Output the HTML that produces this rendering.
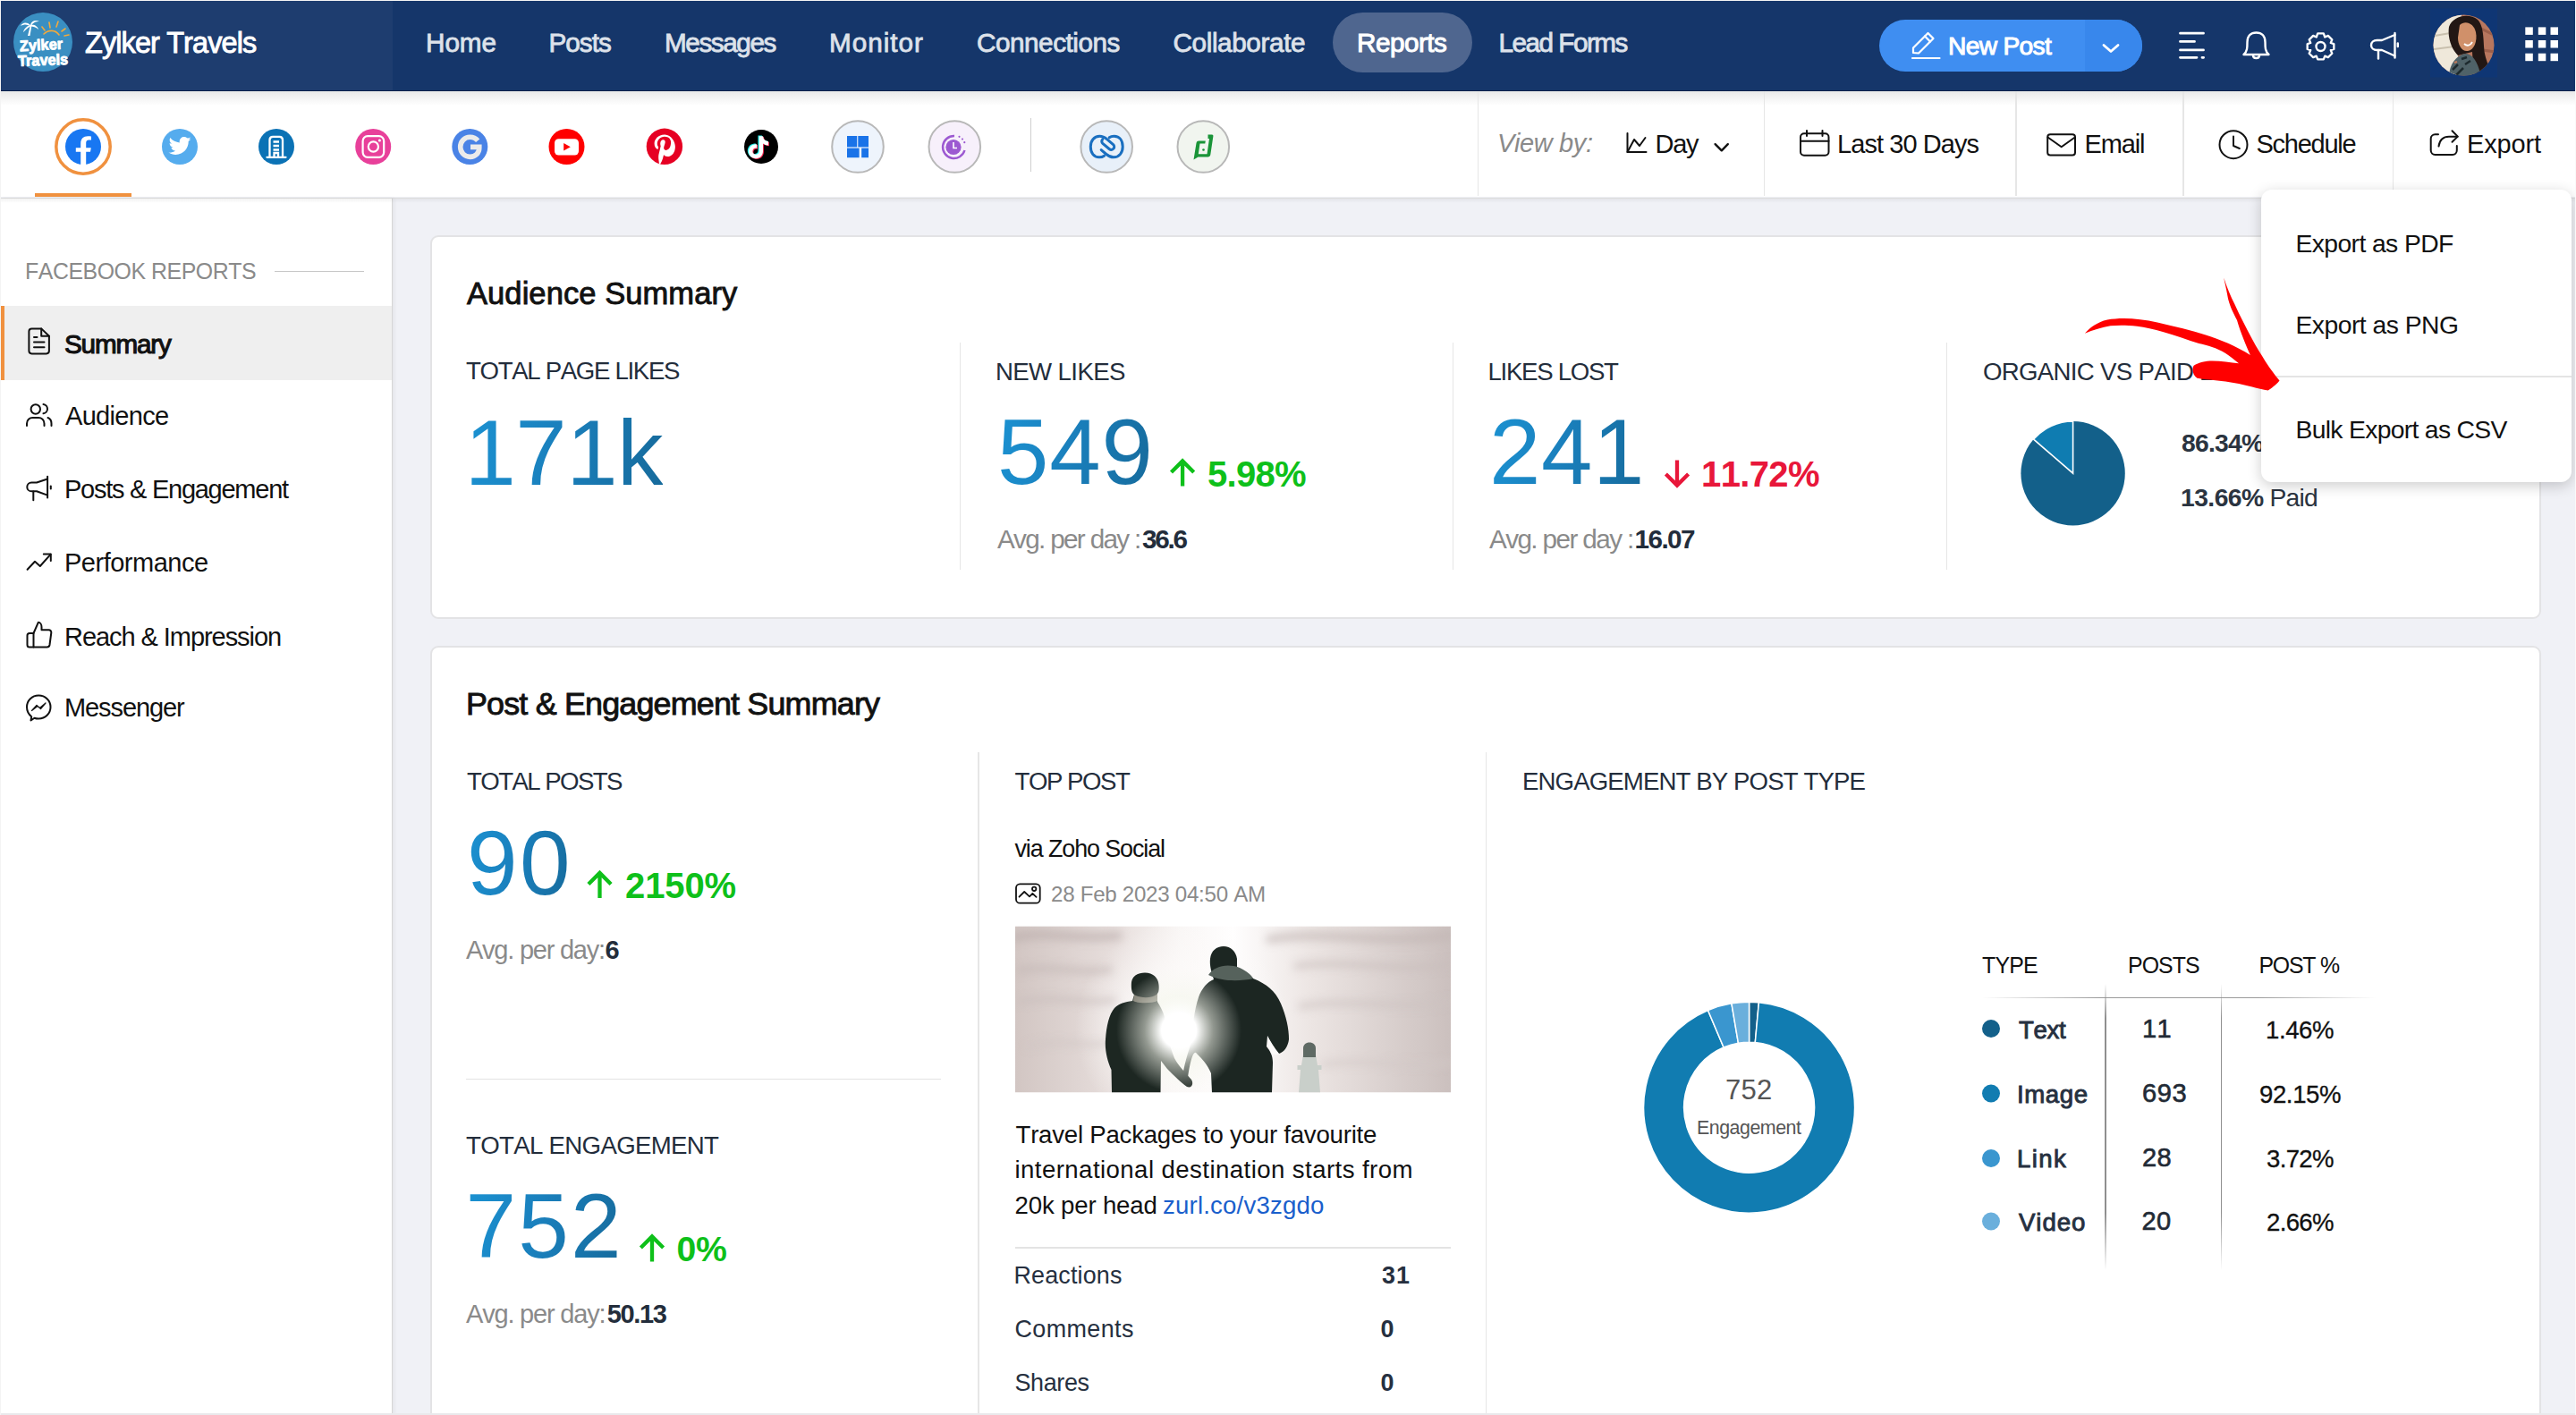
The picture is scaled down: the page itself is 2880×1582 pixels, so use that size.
<!DOCTYPE html>
<html><head><meta charset="utf-8">
<style>
html,body{margin:0;padding:0;}
body{width:2880px;height:1582px;position:relative;overflow:hidden;background:#f0f1f6;font-family:"Liberation Sans",sans-serif;}
.a{position:absolute;box-sizing:border-box;}
.t{position:absolute;white-space:nowrap;font-kerning:none;font-family:"Liberation Sans",sans-serif;}
.g{background:linear-gradient(100deg,#1b92d2 0%,#1a80bd 45%,#166a9b 100%);-webkit-background-clip:text;background-clip:text;color:transparent;}
svg{position:absolute;overflow:visible;}
</style></head>
<body>
<!-- page frame -->
<div class="a" style="left:0;top:0;width:2880px;height:1582px;border-left:1px solid #f4f4f4;border-top:1px solid #f4f4f4;border-right:1.5px solid #fafafa;z-index:20;pointer-events:none;"></div>

<!-- header -->
<div class="a" style="left:0;top:0;width:2880px;height:102px;background:#15366a;"></div>
<div class="a" style="left:0;top:0;width:439px;height:101px;background:#1e3d6f;"></div>
<div class="a" style="left:0;top:101px;width:2880px;height:1px;background:#04204a;"></div>
<!-- reports pill -->
<div class="a" style="left:1490px;top:13.5px;width:155.5px;height:67px;border-radius:34px;background:#4f668f;"></div>
<!-- new post button -->
<div class="a" style="left:2101px;top:22px;width:293.5px;height:57.5px;border-radius:29px;background:#3f8ef1;overflow:hidden;">
  <div class="a" style="left:229.5px;top:0;width:64px;height:58px;background:#3887ec;"></div>
</div>

<!-- sub header -->
<div class="a" style="left:0;top:102px;width:2880px;height:118px;background:#fff;"></div>
<div class="a" style="left:0;top:102px;width:2880px;height:16px;background:linear-gradient(#e9e9e9,#ffffff);"></div>
<div class="a" style="left:0;top:220.5px;width:2880px;height:1.5px;background:#dcdcdc;"></div>
<div class="a" style="left:0;top:222px;width:2880px;height:5px;background:linear-gradient(rgba(0,0,0,0.05),rgba(0,0,0,0));z-index:1;"></div>
<!-- toolbar separators -->
<div class="a" style="left:1651.5px;top:102px;width:1.5px;height:117px;background:#e6e6e6;"></div>
<div class="a" style="left:1971.5px;top:102px;width:1.5px;height:117px;background:#e6e6e6;"></div>
<div class="a" style="left:2253px;top:102px;width:1.5px;height:117px;background:#e6e6e6;"></div>
<div class="a" style="left:2440px;top:102px;width:1.5px;height:117px;background:#e6e6e6;"></div>
<div class="a" style="left:2674.5px;top:102px;width:1.5px;height:117px;background:#e6e6e6;"></div>
<!-- FB underline -->
<div class="a" style="left:39px;top:216px;width:108px;height:4px;background:#f0913f;"></div>
<!-- icon divider -->
<div class="a" style="left:1151.5px;top:132px;width:1.5px;height:60px;background:#cfcfcf;"></div>

<!-- sidebar -->
<div class="a" style="left:0;top:222px;width:439px;height:1360px;background:#fff;border-right:1.5px solid #d6d6d6;box-shadow:2px 0 4px rgba(0,0,0,0.05);"></div>
<div class="a" style="left:1px;top:342px;width:436.5px;height:82.5px;background:#efefef;"></div>
<div class="a" style="left:1px;top:342px;width:4px;height:82.5px;background:#f0913f;"></div>
<div class="a" style="left:307px;top:302.5px;width:100px;height:1.5px;background:#c8c8c8;"></div>

<!-- audience card -->
<div class="a" style="left:480.5px;top:262.5px;width:2360.5px;height:429px;background:#fff;border:2px solid #e3e3e5;border-radius:9px;"></div>
<div class="a" style="left:1072.5px;top:382.5px;width:1.5px;height:254px;background:#e6e6e6;"></div>
<div class="a" style="left:1623.5px;top:382.5px;width:1.5px;height:254px;background:#e6e6e6;"></div>
<div class="a" style="left:2175.5px;top:382.5px;width:1.5px;height:254px;background:#e6e6e6;"></div>

<!-- post card -->
<div class="a" style="left:480.5px;top:721.5px;width:2360.5px;height:900px;background:#fff;border:2px solid #e3e3e5;border-radius:9px;"></div>
<div class="a" style="left:1093px;top:841px;width:1.5px;height:760px;background:#e6e6e6;"></div>
<div class="a" style="left:1660.5px;top:841px;width:1.5px;height:760px;background:#e6e6e6;"></div>
<div class="a" style="left:521px;top:1205.5px;width:531px;height:1.5px;background:#e3e3e3;"></div>
<div class="a" style="left:1135px;top:1393.5px;width:487px;height:2px;background:#e3e3e3;"></div>
<!-- table lines -->
<div class="a" style="left:2216px;top:1114.5px;width:440px;height:1.5px;background:linear-gradient(90deg,rgba(150,150,150,0) 0%,#9a9a9a 30%,#9a9a9a 70%,rgba(150,150,150,0) 100%);"></div>
<div class="a" style="left:2353px;top:1100px;width:1.5px;height:320px;background:linear-gradient(rgba(140,140,140,0),#8f8f8f 12%,#8f8f8f 80%,rgba(140,140,140,0));"></div>
<div class="a" style="left:2482.5px;top:1100px;width:1.5px;height:320px;background:linear-gradient(rgba(140,140,140,0),#8f8f8f 12%,#8f8f8f 80%,rgba(140,140,140,0));"></div>

<!-- page bottom line -->
<div class="a" style="left:0;top:1580px;width:2880px;height:2px;background:#e9e9ec;z-index:19;"></div>

<!-- dropdown -->
<div class="a" style="left:2528px;top:212px;width:347px;height:327px;background:#fff;border-radius:12px;box-shadow:0 4px 16px rgba(0,0,0,0.2);z-index:5;">
  <div class="a" style="left:0;top:208px;width:347px;height:2px;background:#e4e4e4;"></div>
</div>

<svg style="left:0;top:0;z-index:3;" width="2880" height="1582" viewBox="0 0 2880 1582">
<defs>
  <radialGradient id="sun" cx="1322" cy="1150" r="120" gradientUnits="userSpaceOnUse">
    <stop offset="0" stop-color="#ffffff"/>
    <stop offset="0.35" stop-color="#fdfbfa"/>
    <stop offset="1" stop-color="#fdfbfa" stop-opacity="0"/>
  </radialGradient>
  <linearGradient id="sky" x1="0" y1="0" x2="1" y2="0">
    <stop offset="0" stop-color="#d2c6c3"/>
    <stop offset="0.22" stop-color="#e6dddb"/>
    <stop offset="0.38" stop-color="#f9f6f5"/>
    <stop offset="0.5" stop-color="#fffefe"/>
    <stop offset="0.68" stop-color="#ece5e3"/>
    <stop offset="1" stop-color="#cbc0be"/>
  </linearGradient>
  <radialGradient id="glow" cx="1318" cy="1152" r="70" gradientUnits="userSpaceOnUse">
    <stop offset="0" stop-color="#ffffff"/>
    <stop offset="0.28" stop-color="#ffffff" stop-opacity="1"/>
    <stop offset="0.55" stop-color="#f3f5ea" stop-opacity="0.55"/>
    <stop offset="1" stop-color="#f4f6ee" stop-opacity="0"/>
  </radialGradient>
  <clipPath id="avclip"><circle cx="2754.5" cy="50.5" r="34"/></clipPath>
  <filter id="blur4" x="-20%" y="-50%" width="140%" height="200%"><feGaussianBlur stdDeviation="5"/></filter>
  <filter id="blur1"><feGaussianBlur stdDeviation="0.7"/></filter>
  <clipPath id="photoclip"><rect x="1135" y="1035.5" width="487" height="186"/></clipPath>
</defs>

<!-- ===== header logo ===== -->
<circle cx="48" cy="47" r="33" fill="#3a8fc2"/>
<g fill="#fff">
  <path d="M31 40 L34 28 L35.5 28 L33.5 40 Z"/>
  <path d="M34 28 C30 24 25 25 23 29 C27 27 30 27 33.5 29 Z"/>
  <path d="M34 28 C35 23 40 22 44 24 C40 24 37 25 34.8 29 Z"/>
  <path d="M34 28 C38 27 42 29 43 33 C40 30 37 29.5 34.5 29.5 Z"/>
  <path d="M34 28 C30 29 27 32 26 36 C29 33 31 31 34 29.5 Z"/>
</g>
<g stroke="#f2a93b" stroke-width="1.6" fill="none" stroke-linecap="round">
  <path d="M49 38 C54 33 62 33 66 39"/>
  <path d="M47 30 L50 34"/><path d="M55 25 L56 31"/><path d="M65 24 L63 30"/><path d="M73 32 L69 35"/><path d="M77 39 L72 40"/>
</g>
<g font-family="Liberation Sans" font-weight="bold" fill="#fff" stroke="#fff" stroke-width="0.9" stroke-linejoin="round">
<text x="22" y="56" font-size="17" textLength="48" lengthAdjust="spacingAndGlyphs" transform="rotate(-3 46 50)">Zylker</text>
<text x="20" y="73" font-size="17" textLength="56" lengthAdjust="spacingAndGlyphs" transform="rotate(-2 48 66)">Travels</text>
</g>

<!-- ===== new post button icons ===== -->
<g stroke="#fff" stroke-width="2.2" fill="none" stroke-linejoin="round" stroke-linecap="round">
  <path d="M2139 59 L2139 53.5 L2155.5 37 L2161.5 43 L2145 59.5 Z"/>
  <path d="M2152 40.5 L2158 46.5"/>
  <path d="M2138 65 L2168.5 65"/>
  <path d="M2352 50.5 L2360 57.5 L2368 50.5" stroke-width="2.8"/>
</g>

<!-- ===== header right icons ===== -->
<g stroke="#fff" stroke-width="2.8" fill="none" stroke-linecap="round">
  <path d="M2437.5 37.2 H2463.5 M2437.5 46.4 H2453.5 M2437.5 55.9 H2463.5 M2437.5 64.3 H2456 M2462 64.3 H2463.6"/>
</g>
<g stroke="#fff" stroke-width="2.4" fill="none" stroke-linejoin="round">
  <path d="M2508.5 61 C2512.5 57.5 2512.5 53 2512.5 47 C2512.5 40 2516.5 36.5 2522.5 36.5 C2528.5 36.5 2532.5 40 2532.5 47 C2532.5 53 2532.5 57.5 2536.5 61 Z"/>
  <path d="M2519 62 C2519 66 2526 66 2526 62"/>
</g>
<g transform="translate(2594.5 51)">
  <path fill="none" stroke="#fff" stroke-width="2.4" stroke-linejoin="round" d="M-3.4 -14 L3.4 -14 L4.9 -9.8 L8.6 -11.4 L13.2 -6.8 L11.6 -3.1 L15.3 -1.9 L15.3 4.1 L11.6 5.3 L13.2 9 L8.6 13.6 L4.9 12 L3.4 15.8 L-3.4 15.8 L-4.9 12 L-8.6 13.6 L-13.2 9 L-11.6 5.3 L-15.3 4.1 L-15.3 -1.9 L-11.6 -3.1 L-13.2 -6.8 L-8.6 -11.4 L-4.9 -9.8 Z" transform="scale(0.97)"/>
  <circle cx="0" cy="1" r="5" fill="none" stroke="#fff" stroke-width="2.4"/>
</g>
<g stroke="#fff" stroke-width="2.4" fill="none" stroke-linejoin="round" stroke-linecap="round">
  <path d="M2677.5 37 V64.5"/>
  <path d="M2677.5 39 L2663 45 H2657.5 C2653.5 45 2651 47.5 2651 50.5 C2651 53.5 2653.5 56 2657.5 56 H2663 L2677.5 62.5"/>
  <path d="M2659 56 V65.5"/>
  <path d="M2680.8 48.5 V52"/>
</g>
<!-- avatar -->
<rect x="2717" y="9.5" width="75" height="77" fill="#0f3674"/>
<g clip-path="url(#avclip)">
  <rect x="2720" y="16" width="70" height="70" fill="#b8775e"/>
  <path d="M2720 16 H2752 L2746 86 H2720 Z" fill="#efe8da"/>
  <path d="M2722 40 L2745 36 M2721 55 L2744 52" stroke="#c9c0ae" stroke-width="2"/>
  <path d="M2770 30 L2790 40 M2768 55 L2790 58" stroke="#9c5f4a" stroke-width="3"/>
  <path d="M2738 30 C2742 18 2760 14 2770 22 C2778 30 2776 48 2778 60 C2780 70 2784 76 2786 84 L2770 86 C2766 76 2764 66 2764 58 L2748 62 C2742 56 2736 44 2738 30 Z" fill="#221714"/>
  <path d="M2750 28 C2756 22 2766 26 2768 36 C2770 46 2766 56 2759 57 C2752 58 2748 50 2748 42 Z" fill="#d0906a"/>
  <path d="M2755 49 C2758 52 2762 51 2764 47" stroke="#fff" stroke-width="1.8" fill="none"/>
  <path d="M2738 86 C2738 72 2746 62 2756 60 C2764 60 2770 68 2774 86 Z" fill="#4f6268"/>
  <path d="M2742 78 L2748 72 M2746 84 L2754 76 M2756 72 L2762 68 M2752 66 L2758 64" stroke="#1d2a2e" stroke-width="2.5"/>
  <path d="M2744 70 L2747 69" stroke="#c27a5a" stroke-width="2"/>
</g>
<!-- grid -->
<g fill="#fff">
  <rect x="2823.3" y="30.4" width="8.5" height="8.5"/><rect x="2837.8" y="30.4" width="8.5" height="8.5"/><rect x="2851.5" y="30.4" width="8.5" height="8.5"/>
  <rect x="2823.3" y="45" width="8.5" height="8.5"/><rect x="2837.8" y="45" width="8.5" height="8.5"/><rect x="2851.5" y="45" width="8.5" height="8.5"/>
  <rect x="2823.3" y="59.7" width="8.5" height="8.5"/><rect x="2837.8" y="59.7" width="8.5" height="8.5"/><rect x="2851.5" y="59.7" width="8.5" height="8.5"/>
</g>

<!-- ===== social icons ===== -->
<circle cx="93" cy="164" r="30.2" fill="none" stroke="#f0913f" stroke-width="3.5"/>
<circle cx="93" cy="164" r="20" fill="#1877f2"/>
<path fill="#fff" d="M90.2 184 V169.8 H84.8 V165.2 H90.2 V160.5 C90.2 155 93.3 152.2 98.2 152.2 C100 152.2 101.5 152.4 102 152.5 V156.5 H99.2 C97 156.5 96.2 157.8 96.2 159.8 V165.2 H101.8 L101 169.8 H96.2 V184 Z"/>

<circle cx="201" cy="164" r="20" fill="#55acee"/>
<path fill="#fff" d="M213.5 155.5 C212.6 155.9 211.6 156.2 210.6 156.3 C211.7 155.6 212.5 154.6 212.9 153.4 C211.9 154 210.8 154.4 209.7 154.6 C207.7 152.5 204.4 152.4 202.3 154.4 C200.9 155.7 200.4 157.6 200.8 159.4 C196.7 159.2 192.9 157.3 190.3 154.1 C189 156.4 189.7 159.3 191.9 160.8 C191.1 160.8 190.3 160.5 189.6 160.1 C189.6 162.5 191.3 164.5 193.6 165 C192.9 165.2 192.1 165.2 191.4 165.1 C192 167.1 193.9 168.5 196 168.6 C194.2 170 192 170.7 189.7 170.7 C189.3 170.7 188.9 170.7 188.5 170.6 C190.8 172.1 193.5 172.9 196.3 172.9 C205.6 172.9 210.7 165.2 210.7 158.5 L210.7 157.9 C211.8 157.1 212.7 156.3 213.5 155.5 Z"/>

<circle cx="309" cy="164" r="20" fill="#0b72b5"/>
<g fill="none" stroke="#fff" stroke-width="2.3">
  <path d="M301.5 175.5 V156.5 C301.5 154 303 152.8 305 152.8 H312.5 C314.5 152.8 316 154 316 156.5 V175.5"/>
  <path d="M305.5 158.5 H312 M305.5 163 H312 M305.5 167.5 H312"/>
  <path d="M306.5 175.5 V171 H311 V175.5"/>
  <path d="M298.5 175.8 H319.5" stroke-linecap="round"/>
</g>

<circle cx="417.2" cy="164" r="20" fill="#e8409a"/>
<g fill="none" stroke="#fff" stroke-width="2.2">
  <rect x="405.6" y="152.2" width="23.6" height="23.6" rx="5.5"/>
  <circle cx="417.4" cy="164" r="5.6"/>
</g>
<circle cx="424.4" cy="157" r="1.5" fill="#fff"/>

<circle cx="525.3" cy="164" r="20" fill="#4a83e6"/>
<path fill="none" stroke="#ebebeb" stroke-width="5.6" d="M534.2 157.2 C532 154.6 528.8 153.2 525.5 153.2 C519.4 153.2 514.7 158.2 514.7 164.3 C514.7 170.4 519.4 175.4 525.5 175.4 C531.5 175.4 535.8 171.2 535.8 165.3 V164.4 H526"/>

<circle cx="633.5" cy="164" r="20" fill="#ff0000"/>
<rect x="620" y="155.2" width="27" height="18.4" rx="4.5" fill="#fff"/>
<path d="M630.2 160 L637.8 164.2 L630.2 168.4 Z" fill="#ff0000"/>

<circle cx="742.9" cy="163.8" r="20.2" fill="#e60023"/>
<path fill="#fff" d="M743.2 150.5 C735.5 150.5 731.6 156 731.6 160.6 C731.6 163.4 732.7 165.9 734.9 166.8 C735.3 166.9 735.6 166.8 735.7 166.4 L736.1 164.9 C736.2 164.5 736.2 164.3 735.9 164 C735.2 163.2 734.8 162.2 734.8 160.8 C734.8 156.5 738 152.7 743.1 152.7 C747.6 152.7 750.1 155.5 750.1 159.1 C750.1 163.9 748 167.9 744.8 167.9 C743.1 167.9 741.8 166.5 742.2 164.7 C742.7 162.6 743.7 160.3 743.7 158.8 C743.7 157.4 743 156.3 741.4 156.3 C739.6 156.3 738.2 158.1 738.2 160.6 C738.2 162.2 738.7 163.2 738.7 163.2 L736.5 172.4 C735.9 175.1 736.4 178.4 736.4 178.8 L737 183.5 L738.3 183.5 C738.6 183 740.3 179.7 740.9 177.6 L742.1 173 C742.7 174.1 744.3 175 746.1 175 C751.3 175 754.9 170.3 754.9 163.9 C754.9 159.1 750.8 150.5 743.2 150.5 Z"/>

<circle cx="851" cy="164" r="19" fill="#000"/>
<g transform="translate(851 164)">
  <path fill="#25f4ee" d="M2.1 -11.8 H-2.3 V5.2 C-2.3 7.2 -4 8.8 -6 8.8 C-8 8.8 -9.6 7.2 -9.6 5.2 C-9.6 3.2 -8 1.6 -6 1.6 C-5.6 1.6 -5.2 1.7 -4.9 1.8 V-2.7 C-5.3 -2.8 -5.6 -2.8 -6 -2.8 C-10.4 -2.8 -14 0.8 -14 5.2 C-14 9.6 -10.4 13.2 -6 13.2 C-1.6 13.2 2 9.6 2 5.2 V-3.5 C3.7 -2.3 5.8 -1.6 8 -1.6 V-6 C4.7 -6 2.1 -8.6 2.1 -11.8 Z" transform="translate(-1.2 -0.8)"/>
  <path fill="#fe2c55" d="M2.1 -11.8 H-2.3 V5.2 C-2.3 7.2 -4 8.8 -6 8.8 C-8 8.8 -9.6 7.2 -9.6 5.2 C-9.6 3.2 -8 1.6 -6 1.6 C-5.6 1.6 -5.2 1.7 -4.9 1.8 V-2.7 C-5.3 -2.8 -5.6 -2.8 -6 -2.8 C-10.4 -2.8 -14 0.8 -14 5.2 C-14 9.6 -10.4 13.2 -6 13.2 C-1.6 13.2 2 9.6 2 5.2 V-3.5 C3.7 -2.3 5.8 -1.6 8 -1.6 V-6 C4.7 -6 2.1 -8.6 2.1 -11.8 Z" transform="translate(0.9 0.8)"/>
  <path fill="#fff" d="M2.1 -11.8 H-2.3 V5.2 C-2.3 7.2 -4 8.8 -6 8.8 C-8 8.8 -9.6 7.2 -9.6 5.2 C-9.6 3.2 -8 1.6 -6 1.6 C-5.6 1.6 -5.2 1.7 -4.9 1.8 V-2.7 C-5.3 -2.8 -5.6 -2.8 -6 -2.8 C-10.4 -2.8 -14 0.8 -14 5.2 C-14 9.6 -10.4 13.2 -6 13.2 C-1.6 13.2 2 9.6 2 5.2 V-3.5 C3.7 -2.3 5.8 -1.6 8 -1.6 V-6 C4.7 -6 2.1 -8.6 2.1 -11.8 Z"/>
</g>

<circle cx="959" cy="164" r="28.8" fill="#eef4fc" stroke="#b8b8b8" stroke-width="2"/>
<g fill="#1a73e8">
  <rect x="947" y="152" width="11.2" height="12.4"/>
  <rect x="959.3" y="152" width="11.7" height="12.4"/>
  <rect x="947" y="165.6" width="13.6" height="10.6"/>
  <rect x="963.2" y="165.6" width="7.8" height="10.6"/>
</g>

<circle cx="1067.3" cy="164" r="28.8" fill="#f7f0fb" stroke="#b8b8b8" stroke-width="2"/>
<circle cx="1066" cy="164.5" r="8.6" fill="#9c59d1"/>
<path d="M1066 159 V165.5 H1070" stroke="#fff" stroke-width="1.6" fill="none"/>
<path d="M1067 152 A12.5 12.5 0 1 0 1078.5 168" stroke="#9c59d1" stroke-width="2.4" fill="none"/>
<circle cx="1072.5" cy="152.8" r="1.1" fill="#9c59d1"/><circle cx="1076" cy="155.5" r="1.1" fill="#9c59d1"/><circle cx="1078.3" cy="159.2" r="1.1" fill="#9c59d1"/>

<circle cx="1237.2" cy="164" r="28.8" fill="#e8f0f9" stroke="#b8b8b8" stroke-width="2"/>
<g fill="none" stroke="#1a6fc0" stroke-width="3" stroke-linecap="round" stroke-linejoin="round">
  <path d="M1234.5 174.2 C1233 175.3 1231 175.8 1229 175.8 C1222.6 175.8 1219.3 170.5 1219.3 164 C1219.3 157.5 1223 152.3 1229.5 152.3 C1232.6 152.3 1235.2 153.6 1237.6 155.6 L1244.6 161.6 C1246 162.9 1246.1 165 1244.8 166.3 C1243.5 167.6 1241.5 167.7 1240.1 166.5 L1232.8 160.3 C1231.5 159.1 1231.4 157.2 1232.6 155.9"/>
  <path d="M1240.2 153.8 C1241.7 152.7 1243.6 152.3 1245.5 152.3 C1251.9 152.3 1255.2 157.5 1255.2 164 C1255.2 170.5 1251.5 175.8 1245 175.8 C1241.9 175.8 1239.3 174.5 1236.9 172.5 L1231.2 167.6"/>
</g>

<circle cx="1345.3" cy="164" r="28.8" fill="#f1f5ef" stroke="#b8b8b8" stroke-width="2"/>
<path fill="#1a9438" d="M1350.5 150.5 H1355 C1356 150.5 1356.5 151.3 1356.4 152.2 L1353.3 173 C1353.1 174.6 1352 175.5 1350.4 175.5 H1339.5 L1334.5 178.5 L1337.5 160 C1337.8 158.3 1338.8 157.5 1340.4 157.5 H1347.8 L1347.3 160.5 H1341.5 L1339.8 172.3 H1349.5 L1352 155 H1350.5 Z"/>
<circle cx="1345.5" cy="167.5" r="1.3" fill="#1a9438"/>

<!-- ===== toolbar icons ===== -->
<g stroke="#111" stroke-width="2" fill="none" stroke-linejoin="round" stroke-linecap="round">
  <path d="M1819.5 149 V170 H1840.5"/>
  <path d="M1819.5 170 L1827 156 L1833 163 L1839.5 154"/>
  <path d="M1917.6 161.2 L1924.8 168.3 L1931.8 161.2" stroke-width="2.4"/>
  <rect x="2013" y="149.2" width="31.5" height="24.6" rx="4"/>
  <path d="M2013 157.8 H2044.5 M2020 146 V152 M2037.5 146 V152"/>
  <rect x="2289.2" y="150.3" width="30.8" height="23.3" rx="3"/>
  <path d="M2289.5 153.5 L2304.7 164.3 L2319.8 153.5"/>
  <circle cx="2497" cy="161.7" r="15.5"/>
  <path d="M2497 152.5 V163 L2503.8 166"/>
  <path d="M2726 150.2 H2722.5 C2719.8 150.2 2717.7 152.3 2717.7 155 V168 C2717.7 170.8 2719.8 173 2722.5 173 H2742 C2744.7 173 2746.8 170.8 2746.8 168 V162.9"/>
  <path d="M2726.5 163.6 C2727.5 156.5 2732 152.8 2738 152.8 H2747.5"/>
  <path d="M2741.5 146.3 L2747.8 152.6 L2741.5 158.8"/>
</g>

<!-- ===== sidebar icons ===== -->
<g stroke="#111" stroke-width="2" fill="none" stroke-linejoin="round" stroke-linecap="round">
  <path d="M46.2 367.4 H35.5 C33.5 367.4 32.4 368.6 32.4 370.5 V392.3 C32.4 394.2 33.5 395.4 35.5 395.4 H51.8 C53.8 395.4 54.9 394.2 54.9 392.3 V375.7 Z"/>
  <path d="M46.2 367.4 V375.7 H54.9"/>
  <path d="M38 377 H41.5 M38 382.6 H49.5 M38 388.3 H49.5"/>
  <circle cx="39.8" cy="457.5" r="5.2"/>
  <path d="M30 476 V473.5 C30 469.5 33 467 36.5 467 H43 C46.5 467 49.5 469.5 49.5 473.5 V476"/>
  <path d="M48.5 452 C51 452.3 53 454.5 53 457.2 C53 459.8 51 462 48.5 462.3"/>
  <path d="M53.5 467 C56 468 57.5 470.3 57.5 473.5 V476"/>
  <path d="M53.1 532.8 V556.5"/>
  <path d="M53.1 535.5 L41 539.5 H35.2 C32.5 539.5 30.3 541.7 30.3 544.4 C30.3 547.1 32.5 549.3 35.2 549.3 H41 L53.1 553.6"/>
  <path d="M37.3 549.5 V559.2"/>
  <path d="M56.8 543.5 V546.5"/>
  <path d="M30.6 636.7 L39 627.8 L44.8 633 L56.5 619.8"/>
  <path d="M48.8 619.5 H56.8 V627"/>
  <path d="M37.5 723.5 H52.5 C54 723.5 55.2 722.5 55.5 721 L57.3 707.5 C57.6 705.7 56.3 704.3 54.5 704.3 H46.5 V701 C46.5 698 44.8 695.8 42.8 695.8 L37.5 708 Z"/>
  <path d="M37.5 708 H33 C31.5 708 30.5 709 30.5 710.5 V721 C30.5 722.5 31.5 723.5 33 723.5 H37.5"/>
  <path transform="translate(0 2.5)" d="M34.5 803 L35.2 798.8 C32 796 30 792 30 788 C30 780.5 36 775 43.2 775 C50.5 775 56.5 780.5 56.5 788 C56.5 795.5 50.5 801 43.2 801 C41.5 801 40 800.8 38.5 800.2 Z"/>
</g>
<path transform="translate(0 2.5)" d="M35.5 792 L41 786 L44.5 789 L51 783.5 L45.5 790 L42 787 Z" fill="#111" stroke="#111" stroke-width="1.2" stroke-linejoin="round"/>

<!-- ===== trend arrows ===== -->
<g stroke-width="4.3" fill="none" stroke-linejoin="miter" stroke-linecap="butt">
  <path d="M1322.1 543.5 V514.5 M1309.5 528 L1322.1 515.4 L1334.7 528" stroke="#0ec01a"/>
  <path d="M1875 514.5 V543.5 M1862.4 530 L1875 542.6 L1887.6 530" stroke="#e8173a"/>
  <path d="M670.5 1004 V975 M657.9 988.5 L670.5 975.9 L683.1 988.5" stroke="#0ec01a"/>
  <path d="M729 1410.5 V1381.5 M716.4 1395 L729 1382.4 L741.6 1395" stroke="#0ec01a"/>
</g>

<!-- ===== organic vs paid pie ===== -->
<circle cx="2317.6" cy="529.2" r="58.2" fill="#13608a"/>
<path d="M2317.6 529.2 L2317.6 471 A58.2 58.2 0 0 0 2273.6 491.1 Z" fill="#0f7cb1" stroke="#fff" stroke-width="1.6" stroke-linejoin="miter"/>

<!-- ===== image icon ===== -->
<g stroke="#111" stroke-width="1.8" fill="none" stroke-linejoin="round" stroke-linecap="round">
  <rect x="1136" y="988.3" width="26.7" height="21.4" rx="4.3"/>
  <path d="M1139.5 1002.7 L1145.2 997 L1151 1002.3 L1154.4 999 L1158.6 1002.8"/>
  <circle cx="1156.2" cy="993.8" r="2.2"/>
</g>

<!-- ===== photo ===== -->
<g clip-path="url(#photoclip)">
  <rect x="1135" y="1035.5" width="487" height="186" fill="url(#sky)"/>
  <rect x="1135" y="1035.5" width="487" height="186" fill="url(#sun)"/>
  <g fill="none" stroke-linecap="round" opacity="0.6" filter="url(#blur4)">
    <path d="M1135 1048 C1170 1040 1210 1052 1250 1046" stroke="#b9acaa" stroke-width="10"/>
    <path d="M1140 1085 C1175 1078 1210 1090 1240 1084" stroke="#c3b7b5" stroke-width="8"/>
    <path d="M1140 1120 C1180 1112 1215 1124 1245 1118" stroke="#c8bdbb" stroke-width="7"/>
    <path d="M1150 1170 C1185 1160 1215 1172 1240 1166" stroke="#cfc5c3" stroke-width="6"/>
    <path d="M1420 1050 C1480 1040 1540 1056 1622 1046" stroke="#c1b5b3" stroke-width="10"/>
    <path d="M1450 1080 C1510 1072 1560 1088 1622 1078" stroke="#c9bebc" stroke-width="8"/>
    <path d="M1455 1125 C1510 1115 1565 1130 1622 1120" stroke="#cdc3c1" stroke-width="8"/>
    <path d="M1480 1190 C1530 1182 1570 1196 1622 1188" stroke="#d3c9c7" stroke-width="7"/>
  </g>
  <!-- woman -->
  <path fill="#1d2722" d="M1243 1221.5 L1242.5 1196 C1238 1186 1235 1174 1236 1162 C1237 1147 1240 1134 1246 1127 C1251 1122 1258 1120 1266 1119 L1268 1112 C1265 1110 1264.5 1104 1265 1098 C1266 1091 1272 1087.5 1280 1087.5 C1289 1087.5 1295 1093 1295.5 1101 C1296 1106 1295.5 1109 1294 1111 L1294 1120 C1297 1125 1300 1130 1302 1137 C1304 1152 1307 1168 1313 1183 C1317 1191 1325 1199 1332 1207 C1335 1212 1332 1217 1327 1215 C1321 1211 1313 1203 1305 1195 L1298 1186 L1297.5 1221.5 Z"/>
  <path fill="#b8ad9c" opacity="0.6" d="M1268 1112 C1274 1116 1288 1117 1294 1111 L1294 1119 C1288 1122 1272 1122 1267 1119 Z"/>
  <!-- man -->
  <path filter="url(#blur1)" fill="#1b2521" d="M1355 1221.5 L1354 1200 C1350 1190 1344 1184 1338 1178 C1334 1172 1330 1190 1328 1205 C1327 1212 1322 1214 1322 1208 C1322 1198 1326 1184 1331 1168 C1333 1150 1335 1130 1340 1115 C1344 1104 1350 1098 1357 1095 C1355 1088 1352 1080 1353 1072 C1354 1063 1360 1058 1368 1058 C1376 1058 1382 1064 1383 1072 L1383 1082 C1390 1086 1396 1090 1401 1094 C1416 1100 1426 1108 1432 1122 C1438 1136 1441 1150 1441 1162 C1440 1170 1436 1176 1430 1178 C1425 1172 1420 1164 1417 1158 L1416 1170 C1420 1175 1423 1180 1423 1188 L1422 1221.5 Z"/>
  <path fill="#56625c" d="M1351 1090 C1358 1080 1372 1077 1386 1082 C1394 1086 1399 1090 1401 1094 C1388 1097 1366 1098 1351 1090 Z"/>
  <path fill="#fff" opacity="0.55" d="M1417 1158 C1420 1164 1425 1172 1430 1178 C1427 1180 1423 1180 1420 1176 Z"/>
  <!-- lighthouse -->
  <path fill="#c9cfca" d="M1452 1221.5 L1454 1196 H1450.5 V1191 H1455 L1457.5 1176 C1457.5 1171 1460 1166.5 1464 1166.5 C1468 1166.5 1470.5 1171 1470.5 1176 L1473 1191 H1477.5 V1196 H1474 L1476 1221.5 Z"/>
  <path fill="#5f6a64" d="M1457 1182 V1172 C1457 1168 1460 1165.5 1464 1165.5 C1468 1165.5 1471 1168 1471 1172 V1182 Z"/>
  <rect x="1135" y="1035.5" width="487" height="186" fill="url(#glow)"/>
</g>

<!-- ===== donut ===== -->
<g transform="translate(1955.6 1238.2)">
</g>
<path d="M1955.60 1120.20 A118 118 0 0 1 1966.41 1120.70 L1962.29 1165.51 A73 73 0 0 0 1955.60 1165.20 Z" fill="#13608a" stroke="#fff" stroke-width="1.5" stroke-linejoin="miter"/>
<path d="M1966.41 1120.70 A118 118 0 1 1 1909.49 1129.58 L1927.07 1171.01 A73 73 0 1 0 1962.29 1165.51 Z" fill="#117cb1" stroke="#fff" stroke-width="1.5" stroke-linejoin="miter"/>
<path d="M1909.49 1129.58 A118 118 0 0 1 1935.90 1121.86 L1943.41 1166.22 A73 73 0 0 0 1927.07 1171.01 Z" fill="#3a96cf" stroke="#fff" stroke-width="1.5" stroke-linejoin="miter"/>
<path d="M1935.90 1121.86 A118 118 0 0 1 1955.53 1120.20 L1955.55 1165.20 A73 73 0 0 0 1943.41 1166.22 Z" fill="#6aafdc" stroke="#fff" stroke-width="1.5" stroke-linejoin="miter"/>

<!-- legend dots -->
<circle cx="2226" cy="1150" r="10" fill="#13608a"/>
<circle cx="2226" cy="1222.5" r="10" fill="#117cb1"/>
<circle cx="2226" cy="1295" r="10" fill="#3a96cf"/>
<circle cx="2226" cy="1365.5" r="10" fill="#6aafdc"/>
</svg>

<svg style="left:0;top:0;z-index:10;" width="2880" height="1582" viewBox="0 0 2880 1582">
<path fill="#ff0000" d="M2330.9 372.7
 C2337 366 2345 360 2356 357.5
 C2372 354.5 2392 356 2412 360.5
 C2432 365 2450 369.5 2466 374.5
 C2482 379.5 2500 387 2515.9 396.9
 C2511 386 2505 372 2501 358
 C2497 350 2492 341 2490.2 329.7
 C2489 322 2487 315 2486.2 310.4
 C2490 322 2494 331 2498.1 339.6
 C2504 353 2511 366 2517.9 379.1
 C2523 389 2528 396 2532.7 403.9
 C2538 412 2543 419 2548.5 425.6
 C2546 429 2540 434 2535.7 436.5
 C2530 436 2524 434 2517.9 432.6
 C2508 430 2498 428 2488.2 426.6
 C2476 425 2464 424 2456.5 422.7
 C2452 420 2450 413 2452.6 408.8
 C2458 405 2466 403.5 2473.3 403.4
 C2483 403.5 2494 405 2503 406.3
 C2498 402 2493 398 2488.2 395
 C2478 389 2468 386 2458.5 384.1
 C2446 380 2432 375 2418.9 371.2
 C2408 368 2398 366 2389.3 364.8
 C2378 363.5 2368 363.5 2359.6 364.3
 C2350 366 2340 369 2330.9 372.7 Z"/>
</svg>

<span class="t" style="left:95.00px;top:31.53px;font-size:32.45px;line-height:32.45px;letter-spacing:-0.880px;color:#ffffff;-webkit-text-stroke:0.9px currentColor;">Zylker Travels</span>
<span class="t" style="left:476.00px;top:33.37px;font-size:29.69px;line-height:29.69px;letter-spacing:-0.060px;color:#dde2ea;-webkit-text-stroke:0.8px currentColor;">Home</span>
<span class="t" style="left:613.50px;top:33.37px;font-size:29.69px;line-height:29.69px;letter-spacing:-0.976px;color:#dde2ea;-webkit-text-stroke:0.8px currentColor;">Posts</span>
<span class="t" style="left:743.00px;top:33.37px;font-size:29.69px;line-height:29.69px;letter-spacing:-1.423px;color:#dde2ea;-webkit-text-stroke:0.8px currentColor;">Messages</span>
<span class="t" style="left:927.00px;top:33.37px;font-size:29.69px;line-height:29.69px;letter-spacing:0.982px;color:#dde2ea;-webkit-text-stroke:0.8px currentColor;">Monitor</span>
<span class="t" style="left:1092.00px;top:33.37px;font-size:29.69px;line-height:29.69px;letter-spacing:-0.469px;color:#dde2ea;-webkit-text-stroke:0.8px currentColor;">Connections</span>
<span class="t" style="left:1311.50px;top:33.37px;font-size:29.69px;line-height:29.69px;letter-spacing:-0.382px;color:#dde2ea;-webkit-text-stroke:0.8px currentColor;">Collaborate</span>
<span class="t" style="left:1675.50px;top:33.37px;font-size:29.69px;line-height:29.69px;letter-spacing:-1.506px;color:#dde2ea;-webkit-text-stroke:0.8px currentColor;">Lead Forms</span>
<span class="t" style="left:1517.00px;top:32.87px;font-size:29.69px;line-height:29.69px;letter-spacing:-0.518px;color:#ffffff;-webkit-text-stroke:1.0px currentColor;">Reports</span>
<span class="t" style="left:2178.00px;top:37.13px;font-size:28.20px;line-height:28.20px;letter-spacing:-0.684px;color:#ffffff;-webkit-text-stroke:1.0px currentColor;">New Post</span>
<span class="t" style="left:1674.00px;top:146.45px;font-size:29.00px;line-height:29.00px;letter-spacing:-0.363px;font-style:italic;color:#8a8a8a;">View by:</span>
<span class="t" style="left:1850.50px;top:147.45px;font-size:29.00px;line-height:29.00px;letter-spacing:-1.286px;color:#111;">Day</span>
<span class="t" style="left:2054.00px;top:147.45px;font-size:29.00px;line-height:29.00px;letter-spacing:-0.932px;color:#111;">Last 30 Days</span>
<span class="t" style="left:2330.50px;top:147.45px;font-size:29.00px;line-height:29.00px;letter-spacing:-1.143px;color:#111;">Email</span>
<span class="t" style="left:2522.50px;top:147.45px;font-size:29.00px;line-height:29.00px;letter-spacing:-1.257px;color:#111;">Schedule</span>
<span class="t" style="left:2758.00px;top:147.45px;font-size:29.00px;line-height:29.00px;letter-spacing:-0.151px;color:#111;">Export</span>
<span class="t" style="left:28.00px;top:290.96px;font-size:24.86px;line-height:24.86px;letter-spacing:-0.442px;color:#8a8a8a;">FACEBOOK REPORTS</span>
<span class="t" style="left:72.00px;top:369.94px;font-size:29.61px;line-height:29.61px;letter-spacing:-1.146px;color:#111;-webkit-text-stroke:1.1px currentColor;">Summary</span>
<span class="t" style="left:73.00px;top:451.45px;font-size:29.00px;line-height:29.00px;letter-spacing:-0.686px;color:#111;">Audience</span>
<span class="t" style="left:72.00px;top:533.45px;font-size:29.00px;line-height:29.00px;letter-spacing:-1.258px;color:#111;">Posts &amp; Engagement</span>
<span class="t" style="left:72.00px;top:615.45px;font-size:29.00px;line-height:29.00px;letter-spacing:-0.489px;color:#111;">Performance</span>
<span class="t" style="left:72.00px;top:698.45px;font-size:29.00px;line-height:29.00px;letter-spacing:-1.058px;color:#111;">Reach &amp; Impression</span>
<span class="t" style="left:72.00px;top:777.45px;font-size:29.00px;line-height:29.00px;letter-spacing:-1.100px;color:#111;">Messenger</span>
<span class="t" style="left:522.00px;top:310.78px;font-size:34.52px;line-height:34.52px;letter-spacing:0.071px;color:#111;-webkit-text-stroke:0.9px currentColor;">Audience Summary</span>
<span class="t" style="left:521.00px;top:401.12px;font-size:27.62px;line-height:27.62px;letter-spacing:-1.326px;color:#232d3b;">TOTAL PAGE LIKES</span>
<span class="t g" style="left:519.50px;top:454.64px;font-size:103.20px;line-height:103.20px;letter-spacing:-0.555px;">171k</span>
<span class="t" style="left:1113.00px;top:401.62px;font-size:27.62px;line-height:27.62px;letter-spacing:-0.617px;color:#232d3b;">NEW LIKES</span>
<span class="t g" style="left:1115.00px;top:453.64px;font-size:103.20px;line-height:103.20px;letter-spacing:0.862px;">549</span>
<span class="t" style="left:1350.00px;top:510.11px;font-size:40.04px;line-height:40.04px;letter-spacing:-0.728px;font-weight:bold;color:#0ec01a;">5.98%</span>
<span class="t" style="left:1115.00px;top:587.87px;font-size:29.69px;line-height:29.69px;letter-spacing:-1.686px;color:#8a8a8a;">Avg. per day :</span>
<span class="t" style="left:1277.00px;top:587.87px;font-size:29.69px;line-height:29.69px;letter-spacing:-2.257px;font-weight:bold;color:#232d3b;">36.6</span>
<span class="t" style="left:1663.50px;top:401.62px;font-size:27.62px;line-height:27.62px;letter-spacing:-1.299px;color:#232d3b;">LIKES LOST</span>
<span class="t g" style="left:1665.00px;top:453.64px;font-size:103.20px;line-height:103.20px;letter-spacing:0.612px;">241</span>
<span class="t" style="left:1902.00px;top:510.11px;font-size:40.04px;line-height:40.04px;letter-spacing:-0.635px;font-weight:bold;color:#e8173a;">11.72%</span>
<span class="t" style="left:1665.00px;top:587.87px;font-size:29.69px;line-height:29.69px;letter-spacing:-1.609px;color:#8a8a8a;">Avg. per day :</span>
<span class="t" style="left:1827.50px;top:587.87px;font-size:29.69px;line-height:29.69px;letter-spacing:-1.570px;font-weight:bold;color:#232d3b;">16.07</span>
<span class="t" style="left:2217.00px;top:401.62px;font-size:27.62px;line-height:27.62px;letter-spacing:-0.680px;color:#232d3b;">ORGANIC VS PAID</span>
<span class="t" style="left:2459.00px;top:401.62px;font-size:27.62px;line-height:27.62px;letter-spacing:1.036px;color:#232d3b;">LIKES</span>
<span class="t" style="left:2439.00px;top:481.04px;font-size:28.31px;line-height:28.31px;letter-spacing:-0.771px;font-weight:bold;color:#2b3440;">86.34% Organic</span>
<span class="t" style="left:2438.00px;top:542.04px;font-size:28.31px;line-height:28.31px;letter-spacing:-0.562px;font-weight:bold;color:#2b3440;">13.66%</span>
<span class="t" style="left:2537.50px;top:542.04px;font-size:28.31px;line-height:28.31px;letter-spacing:-0.799px;color:#2b3440;">Paid</span>
<span class="t" style="left:521.00px;top:770.11px;font-size:35.90px;line-height:35.90px;letter-spacing:-0.825px;color:#111;-webkit-text-stroke:0.9px currentColor;">Post &amp; Engagement Summary</span>
<span class="t" style="left:522.00px;top:859.62px;font-size:27.62px;line-height:27.62px;letter-spacing:-1.582px;color:#232d3b;">TOTAL POSTS</span>
<span class="t g" style="left:522.00px;top:914.87px;font-size:101.75px;line-height:101.75px;letter-spacing:2.411px;">90</span>
<span class="t" style="left:699.00px;top:970.11px;font-size:40.04px;line-height:40.04px;letter-spacing:-0.138px;font-weight:bold;color:#0ec01a;">2150%</span>
<span class="t" style="left:521.00px;top:1048.45px;font-size:29.00px;line-height:29.00px;letter-spacing:-1.234px;color:#8a8a8a;">Avg. per day:</span>
<span class="t" style="left:676.50px;top:1048.45px;font-size:29.00px;line-height:29.00px;letter-spacing:0.000px;font-weight:bold;color:#232d3b;">6</span>
<span class="t" style="left:521.00px;top:1266.62px;font-size:27.62px;line-height:27.62px;letter-spacing:-0.676px;color:#232d3b;">TOTAL ENGAGEMENT</span>
<span class="t g" style="left:520.50px;top:1321.37px;font-size:101.75px;line-height:101.75px;letter-spacing:2.161px;">752</span>
<span class="t" style="left:756.50px;top:1377.32px;font-size:39.20px;line-height:39.20px;letter-spacing:-0.294px;font-weight:bold;color:#0ec01a;">0%</span>
<span class="t" style="left:521.00px;top:1455.45px;font-size:29.00px;line-height:29.00px;letter-spacing:-1.193px;color:#8a8a8a;">Avg. per day:</span>
<span class="t" style="left:678.75px;top:1455.45px;font-size:29.00px;line-height:29.00px;letter-spacing:-1.361px;font-weight:bold;color:#232d3b;">50.13</span>
<span class="t" style="left:1134.50px;top:859.62px;font-size:27.62px;line-height:27.62px;letter-spacing:-1.462px;color:#232d3b;">TOP POST</span>
<span class="t" style="left:1134.50px;top:936.20px;font-size:26.93px;line-height:26.93px;letter-spacing:-1.113px;color:#111;">via Zoho Social</span>
<span class="t" style="left:1175.00px;top:987.55px;font-size:24.16px;line-height:24.16px;letter-spacing:-0.297px;color:#8a8a8a;">28 Feb 2023 04:50 AM</span>
<span class="t" style="left:1135.50px;top:1254.62px;font-size:27.62px;line-height:27.62px;letter-spacing:-0.232px;color:#111;">Travel Packages to your favourite</span>
<span class="t" style="left:1134.50px;top:1294.12px;font-size:27.62px;line-height:27.62px;letter-spacing:0.425px;color:#111;">international destination starts from</span>
<span class="t" style="left:1134.50px;top:1334.12px;font-size:27.62px;line-height:27.62px;letter-spacing:-0.166px;color:#111;">20k per head</span>
<span class="t" style="left:1300.00px;top:1334.12px;font-size:27.62px;line-height:27.62px;letter-spacing:0.180px;color:#1a5fcc;">zurl.co/v3zgdo</span>
<span class="t" style="left:1133.50px;top:1413.20px;font-size:26.93px;line-height:26.93px;letter-spacing:0.156px;color:#263040;">Reactions</span>
<span class="t" style="left:1545.00px;top:1413.20px;font-size:26.93px;line-height:26.93px;letter-spacing:1.027px;font-weight:bold;color:#263040;">31</span>
<span class="t" style="left:1134.50px;top:1473.20px;font-size:26.93px;line-height:26.93px;letter-spacing:0.401px;color:#263040;">Comments</span>
<span class="t" style="left:1543.50px;top:1473.20px;font-size:26.93px;line-height:26.93px;letter-spacing:0.000px;font-weight:bold;color:#263040;">0</span>
<span class="t" style="left:1134.50px;top:1533.20px;font-size:26.93px;line-height:26.93px;letter-spacing:-0.368px;color:#263040;">Shares</span>
<span class="t" style="left:1543.50px;top:1533.20px;font-size:26.93px;line-height:26.93px;letter-spacing:0.000px;font-weight:bold;color:#263040;">0</span>
<span class="t" style="left:1702.00px;top:859.62px;font-size:27.62px;line-height:27.62px;letter-spacing:-0.889px;color:#232d3b;">ENGAGEMENT BY POST TYPE</span>
<span class="t" style="left:1929.00px;top:1202.70px;font-size:31.07px;line-height:31.07px;letter-spacing:0.225px;color:#555;">752</span>
<span class="t" style="left:1897.00px;top:1250.88px;font-size:21.40px;line-height:21.40px;letter-spacing:-0.485px;color:#555;">Engagement</span>
<span class="t" style="left:2216.00px;top:1066.96px;font-size:24.86px;line-height:24.86px;letter-spacing:-0.782px;color:#111;">TYPE</span>
<span class="t" style="left:2379.00px;top:1066.96px;font-size:24.86px;line-height:24.86px;letter-spacing:-0.921px;color:#111;">POSTS</span>
<span class="t" style="left:2525.50px;top:1066.96px;font-size:24.86px;line-height:24.86px;letter-spacing:-1.218px;color:#111;">POST %</span>
<span class="t" style="left:2257.00px;top:1137.62px;font-size:27.62px;line-height:27.62px;letter-spacing:-0.342px;color:#263040;-webkit-text-stroke:0.9px currentColor;">Text</span>
<span class="t" style="left:2394.92px;top:1136.39px;font-size:29.07px;line-height:29.07px;letter-spacing:0.500px;color:#222a35;-webkit-text-stroke:0.6px currentColor;">11</span>
<span class="t" style="left:2533.00px;top:1137.62px;font-size:27.62px;line-height:27.62px;letter-spacing:-0.434px;color:#111;-webkit-text-stroke:0.3px currentColor;">1.46%</span>
<span class="t" style="left:2255.00px;top:1209.62px;font-size:27.62px;line-height:27.62px;letter-spacing:0.593px;color:#263040;-webkit-text-stroke:0.9px currentColor;">Image</span>
<span class="t" style="left:2395.09px;top:1208.39px;font-size:29.07px;line-height:29.07px;letter-spacing:0.500px;color:#222a35;-webkit-text-stroke:0.6px currentColor;">693</span>
<span class="t" style="left:2526.00px;top:1209.62px;font-size:27.62px;line-height:27.62px;letter-spacing:-0.418px;color:#111;-webkit-text-stroke:0.3px currentColor;">92.15%</span>
<span class="t" style="left:2255.00px;top:1281.62px;font-size:27.62px;line-height:27.62px;letter-spacing:1.385px;color:#263040;-webkit-text-stroke:0.9px currentColor;">Link</span>
<span class="t" style="left:2394.92px;top:1280.39px;font-size:29.07px;line-height:29.07px;letter-spacing:0.500px;color:#222a35;-webkit-text-stroke:0.6px currentColor;">28</span>
<span class="t" style="left:2534.00px;top:1281.62px;font-size:27.62px;line-height:27.62px;letter-spacing:-0.684px;color:#111;-webkit-text-stroke:0.3px currentColor;">3.72%</span>
<span class="t" style="left:2257.00px;top:1352.62px;font-size:27.62px;line-height:27.62px;letter-spacing:0.935px;color:#263040;-webkit-text-stroke:0.9px currentColor;">Video</span>
<span class="t" style="left:2394.42px;top:1351.39px;font-size:29.07px;line-height:29.07px;letter-spacing:0.500px;color:#222a35;-webkit-text-stroke:0.6px currentColor;">20</span>
<span class="t" style="left:2534.00px;top:1352.62px;font-size:27.62px;line-height:27.62px;letter-spacing:-0.684px;color:#111;-webkit-text-stroke:0.3px currentColor;">2.66%</span>
<span class="t" style="left:2566.50px;top:258.04px;font-size:28.31px;line-height:28.31px;letter-spacing:-0.600px;color:#111;z-index:6;">Export as PDF</span>
<span class="t" style="left:2566.50px;top:348.54px;font-size:28.31px;line-height:28.31px;letter-spacing:-0.517px;color:#111;z-index:6;">Export as PNG</span>
<span class="t" style="left:2566.50px;top:466.04px;font-size:28.31px;line-height:28.31px;letter-spacing:-0.683px;color:#111;z-index:6;">Bulk Export as CSV</span>

</body></html>
